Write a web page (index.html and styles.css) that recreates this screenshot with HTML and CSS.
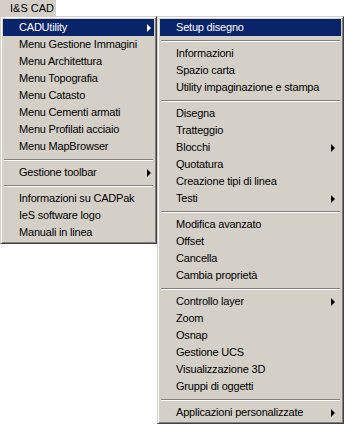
FILE: index.html
```html
<!DOCTYPE html>
<html lang="it">
  <head>
    <meta charset="UTF-8" />
    <meta name="viewport" content="width=device-width, initial-scale=1.0" />
    <title>I&amp;S CAD</title>
    <link rel="stylesheet" href="styles.css">
  </head>
  <body>
    <div class="menubar">
      <span class="menubar-item">I&amp;S CAD</span>
    </div>

    <div class="menus">
      <ul class="menu menu-main">
        <li class="item active has-sub">CADUtility</li>
        <li class="item">Menu Gestione Immagini</li>
        <li class="item">Menu Architettura</li>
        <li class="item">Menu Topografia</li>
        <li class="item">Menu Catasto</li>
        <li class="item">Menu Cementi armati</li>
        <li class="item">Menu Profilati acciaio</li>
        <li class="item">Menu MapBrowser</li>
        <li class="sep"></li>
        <li class="item has-sub">Gestione toolbar</li>
        <li class="sep"></li>
        <li class="item">Informazioni su CADPak</li>
        <li class="item">IeS software logo</li>
        <li class="item">Manuali in linea</li>
      </ul>

      <ul class="menu menu-sub">
        <li class="item active">Setup disegno</li>
        <li class="sep"></li>
        <li class="item">Informazioni</li>
        <li class="item">Spazio carta</li>
        <li class="item">Utility impaginazione e stampa</li>
        <li class="sep"></li>
        <li class="item">Disegna</li>
        <li class="item">Tratteggio</li>
        <li class="item has-sub">Blocchi</li>
        <li class="item">Quotatura</li>
        <li class="item">Creazione tipi di linea</li>
        <li class="item has-sub">Testi</li>
        <li class="sep"></li>
        <li class="item">Modifica avanzato</li>
        <li class="item">Offset</li>
        <li class="item">Cancella</li>
        <li class="item">Cambia proprietà</li>
        <li class="sep"></li>
        <li class="item has-sub">Controllo layer</li>
        <li class="item">Zoom</li>
        <li class="item">Osnap</li>
        <li class="item">Gestione UCS</li>
        <li class="item">Visualizzazione 3D</li>
        <li class="item">Gruppi di oggetti</li>
        <li class="sep"></li>
        <li class="item has-sub">Applicazioni personalizzate</li>
      </ul>
    </div>
  </body>
</html>
```

FILE: styles.css
```css
:root {
  --face: #d4d0c8;
  --shadow: #808080;
  --dark: #404040;
  --select: #0a246a;
}
* {
  margin: 0;
  padding: 0;
  box-sizing: border-box;
}
body {
  font-family: "Liberation Sans", Arial, sans-serif;
  font-size: 11px;
  letter-spacing: -0.2px;
  color: #000;
  background: #fff;
}
.menubar {
  height: 16px;
  display: flex;
}
.menubar-item {
  width: 56px;
  background: var(--face);
  line-height: 16px;
  padding-left: 10px;
  letter-spacing: 0;
}
.menus {
  display: flex;
  align-items: flex-start;
}
.menu {
  list-style: none;
  background: var(--face);
  border: 1px solid;
  border-color: var(--face) var(--dark) var(--dark) var(--face);
  box-shadow: inset 1px 1px #fff, inset -1px -1px var(--shadow);
  padding: 2px;
}
.menu-main {
  width: 157px;
}
.menu-sub {
  width: 187px;
}
.item {
  height: 17px;
  line-height: 17px;
  padding-left: 16px;
  white-space: nowrap;
  display: flex;
  align-items: center;
}
.item.active {
  background: var(--select);
  color: #fff;
}
.has-sub::after {
  content: "";
  margin-left: auto;
  margin-right: 3px;
  border-left: 4px solid currentColor;
  border-top: 4px solid transparent;
  border-bottom: 4px solid transparent;
}
.menu-sub .has-sub::after {
  margin-right: 6px;
}
.sep {
  height: 9px;
  padding: 4px 1px 0;
}
.sep::before {
  content: "";
  display: block;
  border-top: 1px solid var(--shadow);
  border-bottom: 1px solid #fff;
}
```
